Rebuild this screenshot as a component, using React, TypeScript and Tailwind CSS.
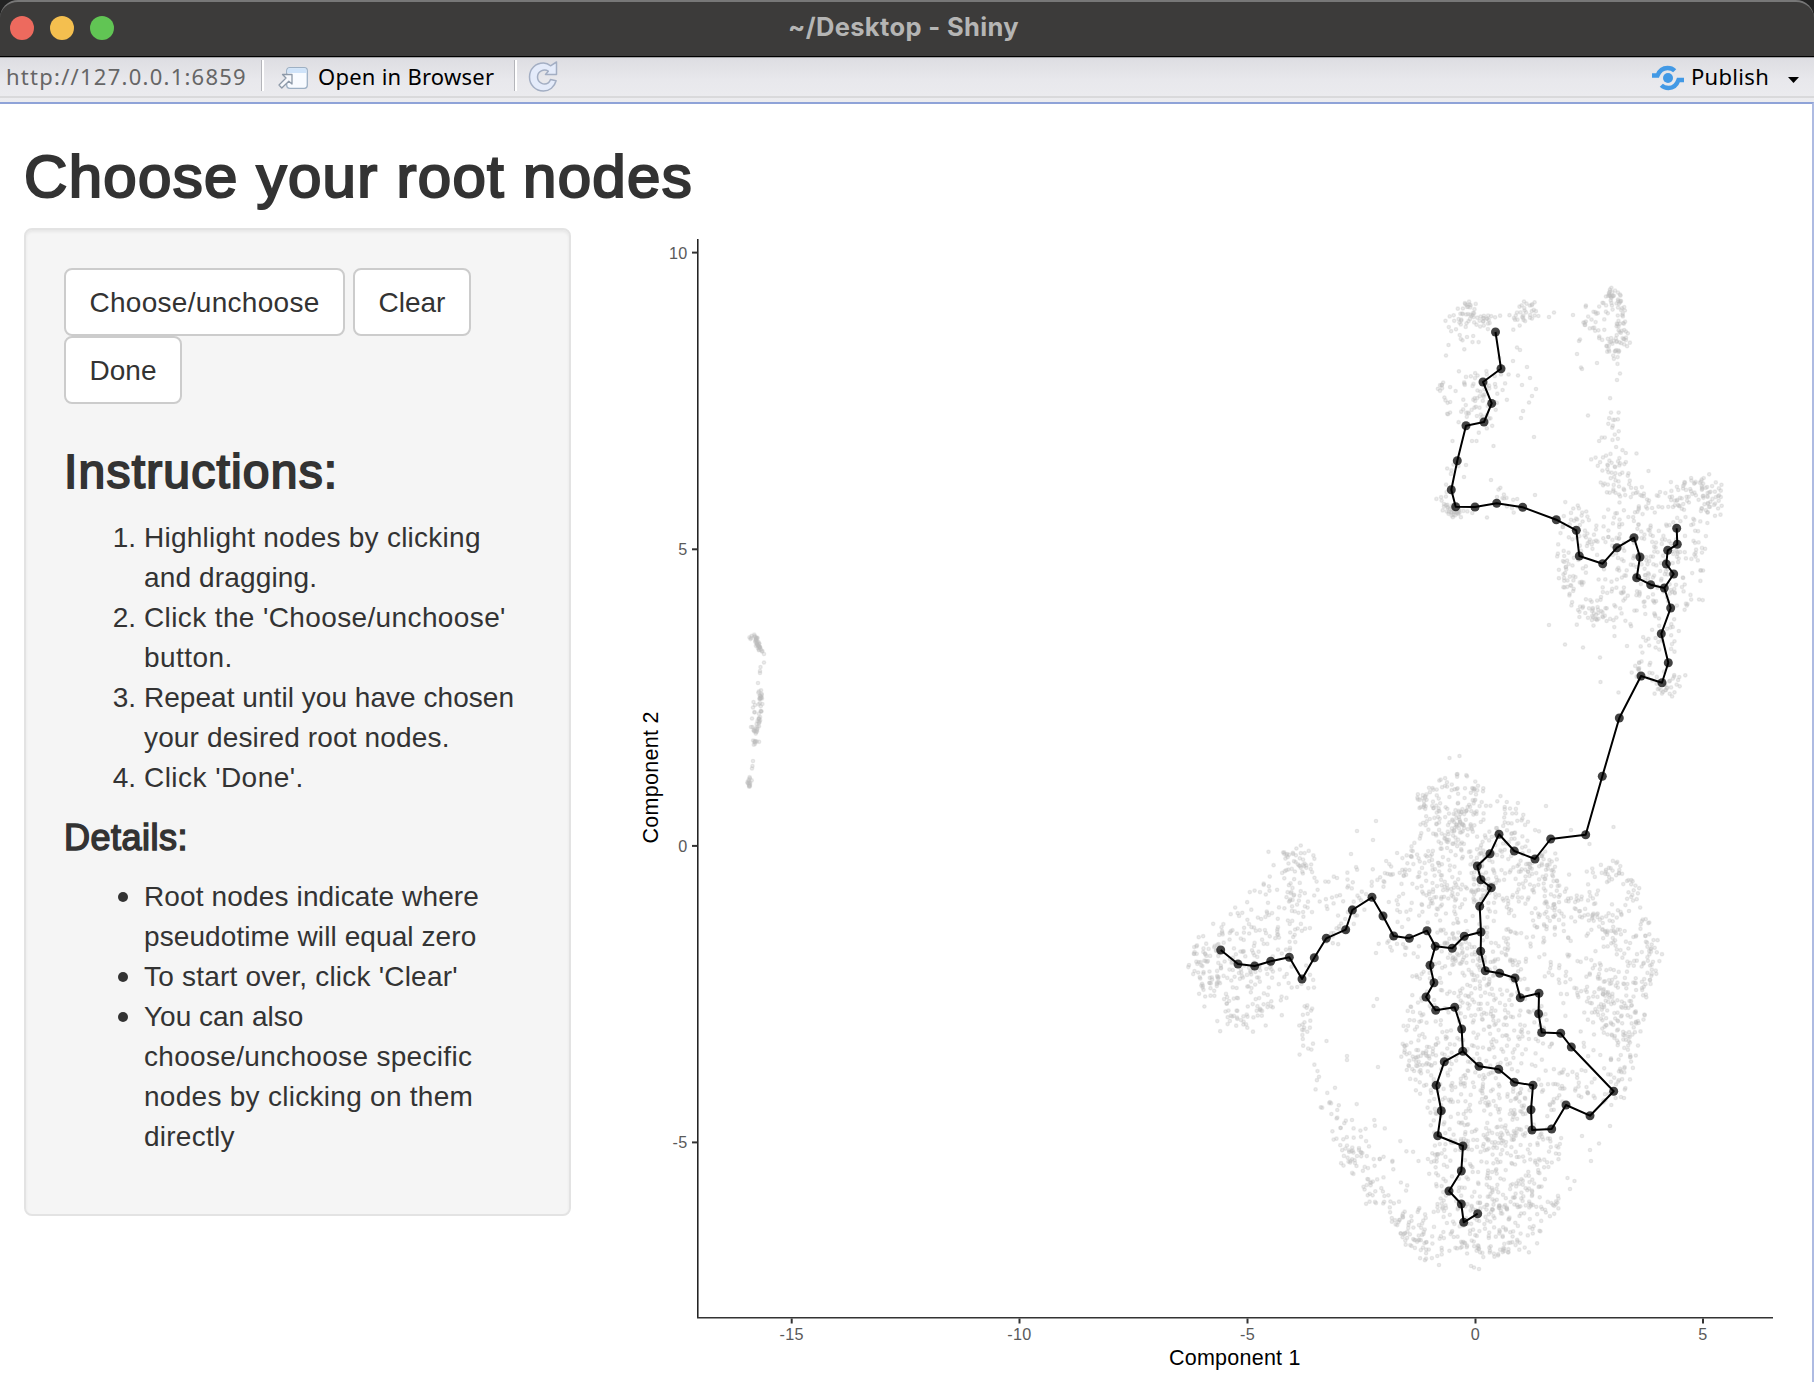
import React from "react";

type Pt = [number, number];

const trunk: Pt[] = [
  [1495.5, 332], [1501, 368.7], [1483, 382], [1491.7, 403.4], [1484, 422], [1466, 425.7], [1457.3, 460.7],
  [1451.3, 489.7], [1455.7, 506.7], [1475, 507], [1496.7, 503.3], [1522.7, 507.3], [1556.3, 519.7],
  [1576.3, 530.3], [1579.3, 556], [1602.7, 563.7], [1617, 547.7], [1634, 537.7], [1640, 557],
  [1636.7, 577.7], [1650.7, 584.7], [1664.3, 588], [1670.7, 608], [1661.3, 633.7], [1668.3, 662.7],
  [1662, 682.7], [1641, 676], [1619.3, 718], [1602.3, 776.3], [1585.7, 834.7], [1550.7, 839],
  [1535, 859], [1514.3, 851], [1499, 834.3], [1490, 853.7], [1477.3, 866], [1481, 879.7],
  [1491.3, 887.7], [1479.7, 906.3], [1481, 932], [1480.7, 951.3], [1485.3, 970.7], [1499.7, 973.3],
  [1515, 978], [1520.3, 997.7], [1539, 993.3], [1538.6, 1013.7], [1541.7, 1032.5], [1560.7, 1033.3],
  [1571.3, 1047], [1613.7, 1091.3], [1590, 1115.7], [1566, 1105], [1551.7, 1129], [1532, 1130],
  [1531, 1109.7], [1533, 1085.3], [1514.3, 1082.3], [1498.7, 1069.3], [1479, 1066.3], [1462.8, 1051.3],
];
const spur: Pt[] = [[1676.7, 528.3], [1677.3, 544.3], [1667.7, 550.3], [1666.3, 564], [1673.7, 574], [1664.3, 588]];
const west: Pt[] = [
  [1481, 932], [1464.3, 936.3], [1452.3, 948.3], [1435.3, 946.3], [1427, 930.7], [1409.3, 938.2],
  [1393.7, 936], [1383, 916], [1372, 897.3], [1352.3, 910], [1345.7, 929.7], [1326.3, 938.3],
  [1314.3, 957.7], [1302, 979], [1289.3, 957.3], [1270.7, 961.3], [1254.7, 966], [1238, 964], [1220.7, 950],
];
const south: Pt[] = [
  [1435.3, 946.3], [1430, 965.3], [1434, 982.7], [1426, 997], [1435.7, 1010.3], [1454.7, 1007.3],
  [1461.7, 1029], [1462.8, 1051.3], [1444.3, 1061.7], [1436.3, 1085.3], [1441.3, 1110.7],
  [1437.7, 1135.7], [1463, 1146], [1461.3, 1171], [1449, 1191], [1461.3, 1204], [1463.7, 1222.3], [1477.7, 1213.7],
];
const branches = [trunk, spur, west, south];
/* Branches meet at shared nodes, so each position is drawn once. */
const nodes = Array.from(new Set(branches.flat().map((p) => p.join(",")))).map((s) => s.split(",").map(Number));

/* Seeded generator so that the cell cloud is the same on every render. */
let seed = 20231;
const rnd = () => {
  seed = (seed * 1664525 + 1013904223) % 4294967296;
  return seed / 4294967296;
};
const gauss = () => Math.sqrt(-2 * Math.log(rnd() + 1e-9)) * Math.cos(2 * Math.PI * rnd());

const inside = (x: number, y: number, p: Pt[]) => {
  let hit = false;
  for (let i = 0, j = p.length - 1; i < p.length; j = i++) {
    const [xi, yi] = p[i];
    const [xj, yj] = p[j];
    if (yi > y !== yj > y && x < ((xj - xi) * (y - yi)) / (yj - yi) + xi) hit = !hit;
  }
  return hit;
};

const cells: Pt[] = [];
const area = (n: number, p: Pt[]) => {
  const xs = p.map((q) => q[0]);
  const ys = p.map((q) => q[1]);
  const x0 = Math.min(...xs), x1 = Math.max(...xs), y0 = Math.min(...ys), y1 = Math.max(...ys);
  let k = 0;
  while (k < n) {
    const x = x0 + rnd() * (x1 - x0);
    const y = y0 + rnd() * (y1 - y0);
    if (inside(x, y, p)) {
      /* soften the polygon's edge */
      cells.push([x + gauss() * 3, y + gauss() * 3]);
      k++;
    }
  }
};
/* Scatter n cells about a polyline with the given spread. */
const band = (n: number, spread: number, p: Pt[]) => {
  const seg = p.slice(1).map((q, i) => Math.hypot(q[0] - p[i][0], q[1] - p[i][1]));
  const total = seg.reduce((a, b) => a + b, 0);
  for (let k = 0; k < n; k++) {
    let d = rnd() * total;
    let i = 0;
    while (i < seg.length - 1 && d > seg[i]) d -= seg[i++];
    const t = d / seg[i];
    const g = () => Math.max(-1.8, Math.min(1.8, gauss())) * spread;
    cells.push([p[i][0] + (p[i + 1][0] - p[i][0]) * t + g(), p[i][1] + (p[i + 1][1] - p[i][1]) * t + g()]);
  }
};

/* top cap, left */
band(52, 5.5, [[1453, 330], [1458, 316], [1468, 308], [1480, 316], [1494, 326]]);
area(20, [[1452, 314], [1498, 316], [1498, 330], [1470, 344], [1450, 342]]);
band(32, 5, [[1514, 322], [1526, 311], [1538, 315]]);
cells.push([1549, 317], [1554, 312.5], [1524, 301.5], [1517, 347.5], [1520, 350], [1446, 355.5], [1513, 361], [1527, 367], [1530, 378], [1518, 375.5], [1522, 385], [1536, 389], [1532, 396], [1529, 402.5], [1523, 411], [1521, 418], [1534, 437], [1493.5, 446], [1452.5, 441], [1472, 441], [1476.5, 441], [1491, 480], [1466, 465], [1464, 477], [1487, 517.5], [1535, 495], [1448.5, 345]);
area(32, [[1442, 382], [1465, 377], [1485, 390], [1480, 426], [1444, 422]]);
area(42, [[1470, 367], [1503, 352], [1508, 400], [1498, 423], [1480, 430], [1470, 400]]);
band(8, 2.5, [[1441, 383], [1446, 402]]);
band(36, 3.4, [[1441, 498], [1448, 511], [1457, 513], [1468, 511]]);
band(13, 3.5, [[1494, 491], [1508, 499], [1516, 507]]);
band(9, 3.5, [[1455, 460], [1449, 495]]);
/* top cap, right */
band(52, 4, [[1608, 293], [1616, 298], [1622, 312], [1624, 335], [1621, 349]]);
band(16, 3.5, [[1608, 294], [1616, 298]]);
area(30, [[1578, 318], [1600, 297], [1610, 318], [1600, 333], [1580, 336]]);
area(24, [[1604, 337], [1622, 341], [1620, 364], [1606, 364]]);
cells.push([1573, 315], [1579, 341], [1577, 354], [1581, 367.5], [1582, 369], [1597, 363], [1620, 373.5], [1617, 380], [1588, 415.5], [1636.5, 453.5], [1648.5, 471]);
area(17, [[1598, 418], [1612, 402], [1620, 404], [1620, 446], [1600, 440]]);
band(48, 9, [[1606, 455], [1616, 460], [1608, 475], [1626, 490]]);
area(14, [[1588, 482], [1640, 477], [1646, 498], [1592, 493]]);
/* right-hand cluster */
area(66, [[1570, 500], [1600, 517], [1604, 540], [1590, 568], [1560, 568], [1558, 530]]);
area(270, [[1608, 512], [1660, 492], [1690, 486], [1718, 482], [1720, 508], [1706, 540], [1704, 563], [1698, 608], [1680, 610], [1650, 603], [1612, 598], [1608, 540]]);
band(48, 7, [[1672, 496], [1692, 486], [1708, 485], [1715, 500], [1708, 512]]);
area(64, [[1560, 564], [1600, 577], [1658, 602], [1668, 638], [1640, 628], [1600, 628], [1566, 620]]);
band(22, 5, [[1585, 612], [1600, 610], [1602, 618]]);
band(16, 8, [[1563, 578], [1575, 585]]);
area(30, [[1642, 602], [1674, 622], [1680, 655], [1665, 678], [1642, 655]]);
band(42, 5, [[1636, 668], [1650, 676], [1663, 694], [1674, 682], [1677, 672]]);
cells.push([1565, 644.5], [1583, 647.5], [1600, 657.5], [1600.5, 682], [1618.5, 692.5], [1614.5, 636], [1549, 625], [1627, 646]);
/* small detached strip */
band(38, 1.5, [[752, 636], [757, 642], [760, 650]]);
cells.push([764, 654], [764, 662.5], [760.5, 667], [760, 671], [760, 673], [758, 683]);
band(36, 1.3, [[760, 690], [761, 704], [759, 718], [758, 728]]);
cells.push([753.5, 702], [755, 705], [753, 707.5], [754.5, 712.5], [754.5, 712], [752, 718.500], [751, 727], [752.5, 727]);
band(9, 1.7, [[753.5, 731], [757, 733]]);
band(9, 1.3, [[754, 743], [757, 741]]);
cells.push([753, 761], [752.5, 766], [752, 768.5]);
band(15, 1.3, [[750, 778], [748, 788]]);
/* upper lobe */
area(78, [[1420, 800], [1445, 774], [1470, 770], [1488, 787], [1483, 810], [1450, 828], [1425, 818]]);
area(42, [[1487, 792], [1522, 806], [1538, 830], [1543, 850], [1505, 850], [1490, 820]]);
band(18, 5, [[1417, 798], [1430, 802]]);
band(46, 12, [[1440, 818], [1450, 838], [1468, 840]]);
area(170, [[1432, 805], [1490, 812], [1500, 850], [1490, 900], [1430, 900], [1398, 860]]);
cells.push([1449.5, 758], [1459.5, 756], [1613.5, 827], [1546, 806], [1571, 830], [1589.5, 844], [1376, 821], [1357, 831], [1373, 840], [1351, 854], [1376, 953], [1373.5, 1006], [1377, 999], [1347, 1056], [1347, 1060], [1326.5, 1041], [1378, 1067]);
/* west lobe */
area(205, [[1190, 945], [1217, 927], [1240, 905], [1275, 866], [1308, 864], [1314, 885], [1306, 930], [1290, 953], [1260, 983], [1222, 998], [1200, 980]]);
band(40, 9, [[1284, 858], [1300, 860], [1314, 866]]);
band(38, 9, [[1198, 947], [1208, 975], [1214, 996]]);
band(38, 7, [[1224, 1018], [1245, 1020], [1273, 1010]]);
area(58, [[1217, 972], [1300, 967], [1320, 962], [1308, 995], [1270, 1008], [1227, 1008]]);
area(84, [[1322, 875], [1400, 852], [1440, 882], [1430, 922], [1402, 922], [1382, 890], [1347, 912], [1325, 928]]);
band(26, 7, [[1322, 935], [1350, 928], [1352, 905]]);
area(14, [[1382, 937], [1423, 947], [1418, 963], [1387, 953]]);
/* thin trail and south-west rim */
band(18, 3.5, [[1308, 1000], [1307, 1020], [1301, 1040]]);
band(17, 6, [[1303, 1040], [1316, 1065], [1328, 1105]]);
band(52, 6.5, [[1334, 1115], [1342, 1145], [1350, 1162], [1372, 1190], [1397, 1215]]);
band(20, 7, [[1345, 1150], [1358, 1163]]);
area(32, [[1337, 1087], [1365, 1097], [1418, 1160], [1418, 1193], [1385, 1183], [1352, 1150]]);
band(54, 5.5, [[1399, 1215], [1412, 1240], [1432, 1258]]);
/* main body */
area(310, [[1430, 892], [1500, 842], [1558, 852], [1568, 900], [1543, 958], [1500, 973], [1440, 958]]);
band(24, 10, [[1520, 865], [1545, 880]]);
area(125, [[1407, 977], [1440, 952], [1475, 965], [1470, 1010], [1470, 1050], [1430, 1068], [1402, 1048], [1412, 1010]]);
area(46, [[1397, 1047], [1430, 1050], [1435, 1093], [1417, 1088]]);
area(180, [[1475, 952], [1520, 972], [1545, 1002], [1553, 1045], [1538, 1073], [1470, 1060], [1465, 1000]]);
area(205, [[1432, 1060], [1480, 1065], [1530, 1090], [1530, 1130], [1500, 1150], [1440, 1150], [1422, 1100]]);
area(215, [[1432, 1140], [1530, 1127], [1562, 1132], [1560, 1165], [1545, 1190], [1500, 1215], [1450, 1215], [1430, 1180]]);
area(58, [[1402, 1212], [1450, 1197], [1480, 1215], [1468, 1253], [1432, 1258]]);
area(130, [[1467, 1212], [1530, 1175], [1562, 1197], [1556, 1213], [1530, 1238], [1490, 1253], [1475, 1253]]);
band(36, 5.5, [[1457, 1250], [1480, 1252], [1500, 1250], [1530, 1238]]);
cells.push([1439, 1265], [1471, 1266], [1474, 1267.5], [1479, 1269], [1591, 1161], [1590, 1150], [1570, 1189], [1574.5, 1181], [1567.5, 1178], [1599, 1143.5], [1582, 1136], [1610, 1126]);
area(50, [[1540, 1062], [1580, 1067], [1603, 1095], [1560, 1105], [1547, 1128]]);
/* east crescent */
band(44, 6, [[1592, 874], [1615, 869], [1626, 880], [1630, 900]]);
area(50, [[1566, 872], [1600, 890], [1600, 930], [1560, 940], [1540, 900]]);
band(32, 4.5, [[1597, 912], [1608, 930], [1614, 944]]);
area(76, [[1612, 903], [1638, 912], [1652, 945], [1650, 988], [1630, 998], [1592, 988], [1587, 950], [1605, 940]]);
band(30, 4, [[1642, 915], [1654, 945], [1655, 965], [1648, 990]]);
area(120, [[1577, 987], [1600, 977], [1646, 987], [1646, 1010], [1635, 1043], [1620, 1048], [1592, 1020]]);
band(16, 8, [[1600, 1000], [1620, 1015]]);
band(42, 7, [[1625, 1030], [1623, 1075], [1608, 1105]]);
area(40, [[1540, 960], [1590, 930], [1590, 1020], [1615, 1075], [1570, 1040]]);

const xTicks: [number, string][] = [[791.7, "-15"], [1019.5, "-10"], [1247.5, "-5"], [1475.5, "0"], [1703, "5"]];
const yTicks: [number, string][] = [[252.6, "10"], [549.3, "5"], [845.9, "0"], [1142.4, "-5"]];

function TrajectoryPlot() {
  return (
    <svg className="block h-[1278px] w-[1200px]" viewBox="612 104 1200 1278" fontFamily='"Liberation Sans", Arial, sans-serif'>
      <g fill="#bebebe" fillOpacity={0.3} stroke="#bebebe" strokeOpacity={0.3} strokeWidth={1.3}>
        {cells.map(([x, y], i) => (
          <circle key={i} cx={x.toFixed(1)} cy={y.toFixed(1)} r={1.7} />
        ))}
      </g>
      <g fill="#000" fillOpacity={0.74}>
        {nodes.map(([x, y], i) => <circle key={i} cx={x} cy={y} r={4.5} />)}
      </g>
      <g fill="none" stroke="#000" strokeWidth={2} strokeLinejoin="round">
        {branches.map((b, k) => (
          <polyline key={k} points={b.map((p) => p.join(",")).join(" ")} />
        ))}
      </g>
      <path d="M697.8 239V1318" stroke="#1a1a1a" strokeWidth={1.5} />
      <path d="M697 1317.8H1773" stroke="#333" strokeWidth={1.5} />
      <g stroke="#333" strokeWidth={2}>
        {xTicks.map(([x]) => <path key={x} d={`M${x} 1318.5v5`} />)}
        {yTicks.map(([y]) => <path key={y} d={`M692 ${y}h5.5`} />)}
      </g>
      <g fill="#5a5a5a" fontSize={16.2}>
        {xTicks.map(([x, t]) => <text key={x} x={x} y={1340} textAnchor="middle" letterSpacing={0.3}>{t}</text>)}
        {yTicks.map(([y, t]) => <text key={y} x={687.5} y={y + 6} textAnchor="end" letterSpacing={0.3}>{t}</text>)}
      </g>
      <g fill="#000" fontSize={21.5}>
        <text x={1169} y={1365} textLength={131.5}>Component 1</text>
        <text transform="translate(658 843.5) rotate(-90)" textLength={132}>Component 2</text>
      </g>
    </svg>
  );
}

function Button({ className, children }: { className: string; children: React.ReactNode }) {
  return (
    <button className={`flex h-[68px] items-center justify-center rounded-lg border-2 border-[#ccc] bg-white pt-[2px] text-[28px] leading-10 ${className}`}>
      {children}
    </button>
  );
}

function Item({ mark, children }: { mark: string; children: React.ReactNode }) {
  return (
    <li className="flex">
      <span className="w-[72px] shrink-0 text-right">
        {mark === "•" ? <span className="mt-[15px] mr-2 inline-block size-[10px] rounded-full bg-[#333] align-top" /> : mark}
      </span>
      <span className="ml-2 flex flex-col whitespace-nowrap">{children}</span>
    </li>
  );
}

const Separator = ({ className }: { className: string }) => (
  <div className={`h-[31px] w-[3px] border-r-2 border-l border-r-white border-l-[#b4b5ba] ${className}`} />
);

export default function App() {
  return (
    <div className="h-[1382px] w-[1814px] overflow-hidden bg-[#222] font-['Liberation_Sans',Arial,sans-serif] text-[#333]">
      <header className="flex h-[57px] items-center rounded-t-[18px] border-t-2 border-b border-t-[#777] border-b-black bg-[#3c3b3a] pb-[2px] pl-[10px]">
        <div className="flex w-[104px] gap-4">
          <span className="size-6 rounded-full bg-[#ed6a5e]" />
          <span className="size-6 rounded-full bg-[#f4bf4f]" />
          <span className="size-6 rounded-full bg-[#61c554]" />
        </div>
        <h1 className="-mt-[2px] ml-[674px] whitespace-nowrap font-['Inter',sans-serif] text-[25.5px] font-bold tracking-[0.35px] text-[#b5b5b4]">~/Desktop - Shiny</h1>
      </header>

      <nav className="flex h-[45px] border-t border-t-[#a5a5a8] bg-linear-to-b from-[#dddde2] from-0% via-[#e8e8ec] via-50% to-[#ececef] font-['Noto_Sans',sans-serif] text-[22px] text-black">
        <div className="flex h-10 w-full items-start border-b-2 border-b-[#d9d9db]">
          <span className="ml-[6px] w-[255px] whitespace-nowrap leading-[36px] tracking-[1.25px] text-[#666]">http://127.0.0.1:6859</span>
          <Separator className="mt-[2px]" />
          <svg className="mt-2 ml-[14px] h-6 w-[31px]" viewBox="0 0 31 24">
            <rect x="8.7" y="1.7" width="20.6" height="20.6" rx="3" fill="#f8fbff" stroke="#9db0c4" strokeWidth="1.3" />
            <path d="M9.4 7V4.5a2.2 2.2 0 0 1 2.2-2.2h14.8a2.2 2.2 0 0 1 2.2 2.2V7Z" fill="#cfe3f9" />
            <path d="M4.500 8.500H14V18L10.800 15.200 3.800 22 1 19 8 12Z" fill="#f7f8fb" stroke="#8d99a8" strokeWidth="1.3" strokeLinejoin="round" />
          </svg>
          <span className="ml-[9px] w-[196px] whitespace-nowrap leading-[36px] tracking-[0.25px]">Open in Browser</span>
          <Separator className="mt-[2px]" />
          <svg className="mt-[2px] ml-[11px] h-[33px] w-[31px]" viewBox="0 0 31 33">
            <path d="M22.500 5.800 28.500 2V14.500H17.500L20.300 11.200C16 8 9.500 11.500 9.500 17s6.500 9 10.800 5.800c1.200-.9 1.700-1.900 2.200-3.300l5.600 1.300C26.500 27 21.500 31 15.500 31 7.500 31 1.500 25 1.500 17S7.500 3 15.500 3c2.700 0 5 1 7 2.800Z" fill="#e4ebfa" stroke="#a3aec3" strokeWidth="1.5" strokeLinejoin="round" />
          </svg>
          <svg className="mt-[7px] ml-auto h-[26px] w-8" viewBox="0 0 32 26" fill="none" stroke="#4299e5" strokeWidth="4.400">
            <path d="M0 10.500H5.500C7.500 5.500 11 3 15.500 3c3 0 5.200.8 7.200 2.800" />
            <path d="M32 15H26.500C24.500 20.500 21 23 16.500 23c-3 0-5.200-.8-7.200-2.800" />
            <circle cx="16" cy="13" r="5" fill="#4299e5" stroke="none" />
          </svg>
          <span className="ml-[7px] w-[97px] whitespace-nowrap leading-[36px] tracking-[0.3px]">Publish</span>
          <svg className="mt-[19px] mr-[15px] h-[6px] w-[11px]" viewBox="0 0 11 6"><path d="M0 0h11L5.500 6Z" /></svg>
        </div>
      </nav>

      <main className="flex h-[1280px] border-t-2 border-r-2 border-t-[#8fa3d8] border-r-[#aebbe2] bg-white">
        <div className="ml-6 w-[588px] shrink-0 pt-10">
          <h2 className="whitespace-nowrap text-[60px] leading-[66px] tracking-[1.3px] [-webkit-text-stroke:2.2px_#333]">Choose your root nodes</h2>
          <section className="mt-[18px] h-[988px] w-[547px] rounded-lg border-2 border-[#e3e3e3] bg-[#f5f5f5] px-[38px] pt-[38px] shadow-[inset_0_2px_3px_rgba(0,0,0,0.06)]">
            <div className="flex flex-wrap gap-x-2">
              <Button className="w-[281px] tracking-[0.3px]">Choose/unchoose</Button>
              <Button className="w-[118px]">Clear</Button>
              <Button className="w-[118px]">Done</Button>
            </div>
            <h3 className="mt-[41px] text-[48px] leading-[53px] tracking-[1.2px] [-webkit-text-stroke:1.9px_#333]">Instructions:</h3>
            <ol className="mt-5 text-[28px] leading-10">
              <Item mark="1.">
                <span className="tracking-[0.25px]">Highlight nodes by clicking</span>
                <span className="tracking-[0.15px]">and dragging.</span>
              </Item>
              <Item mark="2.">
                <span className="tracking-[0.38px]">Click the 'Choose/unchoose'</span>
                <span className="tracking-[0.45px]">button.</span>
              </Item>
              <Item mark="3.">
                <span className="tracking-[0.04px]">Repeat until you have chosen</span>
                <span className="tracking-[0.15px]">your desired root nodes.</span>
              </Item>
              <Item mark="4.">
                <span className="tracking-[0.45px]">Click 'Done'.</span>
              </Item>
            </ol>
            <h4 className="mt-5 text-[36px] leading-[39px] tracking-[0.5px] [-webkit-text-stroke:1.5px_#333]">Details:</h4>
            <ul className="mt-5 text-[28px] leading-10">
              <Item mark="•">
                <span className="tracking-[0.14px]">Root nodes indicate where</span>
                <span className="tracking-[0.09px]">pseudotime will equal zero</span>
              </Item>
              <Item mark="•">
                <span className="tracking-[0.21px]">To start over, click 'Clear'</span>
              </Item>
              <Item mark="•">
                <span>You can also</span>
                <span className="tracking-[0.32px]">choose/unchoose specific</span>
                <span className="tracking-[0.28px]">nodes by clicking on them</span>
                <span className="tracking-[0.25px]">directly</span>
              </Item>
            </ul>
          </section>
        </div>
        <TrajectoryPlot />
      </main>
    </div>
  );
}
